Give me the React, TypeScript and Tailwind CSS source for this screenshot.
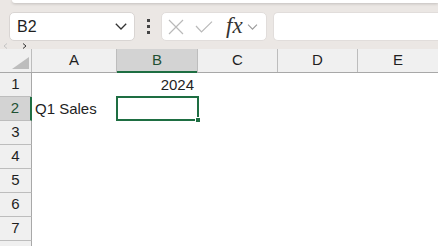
import React from "react";

const cols = [
  { name: "A", w: "w-[85px]" },
  { name: "B", w: "w-[81px]" },
  { name: "C", w: "w-[80px]" },
  { name: "D", w: "w-[80px]" },
  { name: "E", w: "w-[80px]" },
];

const rows = [1, 2, 3, 4, 5, 6, 7, 8];

const ChevronDown = ({ className }: { className?: string }) => (
  <svg viewBox="0 0 12 7" className={className} fill="none" stroke="currentColor" strokeWidth="1.3">
    <path d="M0.8 0.8 L6 6 L11.2 0.8" />
  </svg>
);

export default function App() {
  return (
    <div
      className="relative w-[438px] h-[246px] overflow-hidden bg-[#ebe7e4] text-[#1f1f1f]"
      style={{ fontFamily: '"Liberation Sans", Arial, sans-serif' }}
    >
      {/* ribbon edge */}
      <div className="ml-[12px] h-[3px] bg-white rounded-bl-[4px] shadow-[0_1px_3px_rgba(0,0,0,0.18)]" />

      {/* formula bar */}
      <div className="flex items-center h-[29px] mt-[9px]">
        <div className="ml-[9px] w-[126px] h-[29px] flex items-center justify-between pl-[7px] pr-[7px] bg-white border border-[#d9d5d3] rounded-[5px]">
          <span className="text-[16px] leading-none">B2</span>
          <ChevronDown className="w-[12px] h-[7px] text-[#333]" />
        </div>
        <div className="w-[26px] flex flex-col items-center gap-[3px]">
          <span className="w-[3px] h-[3px] bg-[#444]" />
          <span className="w-[3px] h-[3px] bg-[#444]" />
          <span className="w-[3px] h-[3px] bg-[#444]" />
        </div>
        <div className="w-[106px] h-[29px] flex items-center bg-white border border-[#e1dddb] rounded-[5px]">
          <svg viewBox="0 0 16 16" className="ml-[6px] w-[16px] h-[16px]" fill="none" stroke="#b9b9b9" strokeWidth="1.2">
            <path d="M1 1 L15 15 M15 1 L1 15" />
          </svg>
          <svg viewBox="0 0 18 12" className="ml-[11px] w-[18px] h-[12px]" fill="none" stroke="#b9b9b9" strokeWidth="1.2">
            <path d="M1 5 L6.5 11 L17 0.6" />
          </svg>
          <span
            className="ml-[13px] text-[23px] leading-none italic text-[#333] -mt-[3px]"
            style={{ fontFamily: '"Liberation Serif", "Times New Roman", serif' }}
          >
            fx
          </span>
          <ChevronDown className="ml-[4px] w-[11px] h-[6px] text-[#9a9a9a]" />
        </div>
        <div className="ml-[6px] flex-1 h-[29px] bg-white border border-[#e1dddb] rounded-l-[5px] border-r-0" />
      </div>

      {/* sheet nav arrows */}
      <div className="flex items-end h-[9px] mt-[-1px]">
        <svg viewBox="0 0 5 6" className="ml-[3px] w-[5px] h-[6px]" fill="none" stroke="#c4c4c4" strokeWidth="1">
          <path d="M4 0.5 L1 3 L4 5.5" />
        </svg>
        <svg viewBox="0 0 5 6" className="ml-[14px] w-[5px] h-[6px]" fill="none" stroke="#333" strokeWidth="1">
          <path d="M1 0.5 L4 3 L1 5.5" />
        </svg>
      </div>

      {/* grid */}
      <div className="bg-white">
        {/* column headers */}
        <div className="flex h-[24px] bg-[#f0f0f0] border-b border-[#a8a8a8]">
          <div className="w-[32px] border-r border-[#bdbdbd] flex items-end justify-end pr-[2px] pb-[3px]">
            <svg viewBox="0 0 17 12" className="w-[17px] h-[12px]">
              <polygon points="17,0 17,12 0,12" fill="#bdbdbd" />
            </svg>
          </div>
          {cols.map((c) => (
            <div
              key={c.name}
              className={
                c.name === "B"
                  ? `${c.w} relative flex items-center justify-center text-[15px] bg-[#d3d3d3] border-r border-[#bdbdbd] text-[#1f5133]`
                  : `${c.w} flex items-center justify-center text-[15px] border-r border-[#bdbdbd] last:border-r-0`
              }
            >
              {c.name}
              {c.name === "B" && <div className="absolute left-0 right-0 bottom-[-1px] h-[2px] bg-[#1e6e42]" />}
            </div>
          ))}
        </div>

        {rows.map((r) => (
          <div key={r} className="flex h-[24px]">
            <div
              className={
                r === 2
                  ? "w-[32px] flex items-center justify-center text-[15px] bg-[#d3d3d3] border-b border-[#bdbdbd] border-r-2 border-r-[#1e6e42] text-[#1f5133]"
                  : "w-[32px] flex items-center justify-center text-[15px] bg-[#f0f0f0] border-b border-[#bdbdbd] border-r border-r-[#a8a8a8]"
              }
            >
              {r < 8 ? r : null}
            </div>
            {cols.map((c) => (
              <div key={c.name} className={`${c.w} relative flex items-center text-[15px]`}>
                {r === 1 && c.name === "B" && <span className="ml-auto pr-[4px]">2024</span>}
                {r === 2 && c.name === "A" && <span className="pl-[3px]">Q1 Sales</span>}
                {r === 2 && c.name === "B" && (
                  <div className="absolute left-[-1px] top-[-1px] w-[83px] h-[25px] border-2 border-[#1e6e42]">
                    <div className="absolute right-[-4px] bottom-[-4px] w-[6px] h-[6px] bg-[#1e6e42] border border-white" />
                  </div>
                )}
              </div>
            ))}
          </div>
        ))}
      </div>
    </div>
  );
}
